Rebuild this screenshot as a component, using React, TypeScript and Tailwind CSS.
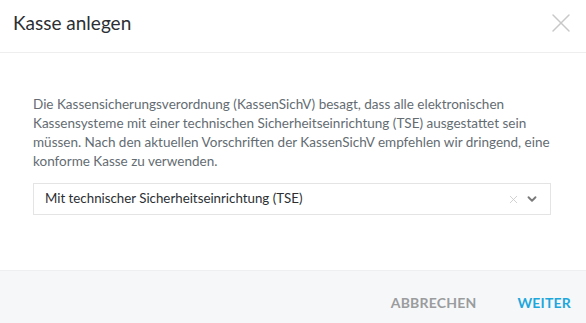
import { X, ChevronDown } from "lucide-react"

export default function App() {
  return (
    <div
      className="w-[586px] h-[323px] bg-white flex flex-col overflow-hidden"
      style={{ fontFamily: 'Lato, "Open Sans", "Liberation Sans", sans-serif' }}
    >
      {/* Header */}
      <div className="h-[53px] flex items-center justify-between pl-[13px] pr-[9px] pb-[6px] border-b border-[#eeeeee]">
        <h2 className="text-[19px] text-[#2b2f33]">Kasse anlegen</h2>
        <X className="w-[32px] h-[32px] text-[#c8c8c8]" strokeWidth={1.1} />
      </div>

      {/* Body */}
      <div className="flex-1 px-[33px] pt-[42px]">
        <p className="text-[13.5px] leading-[19px] text-[#646c72]">
          Die Kassensicherungsverordnung (KassenSichV) besagt, dass alle elektronischen
          <br />
          Kassensysteme mit einer technischen Sicherheitseinrichtung (TSE) ausgestattet sein
          <br />
          müssen. Nach den aktuellen Vorschriften der KassenSichV empfehlen wir dringend, eine
          <br />
          konforme Kasse zu verwenden.
        </p>
        <div className="mt-[12px] mr-[2px] h-[32px] border border-[#e4e4e4] flex items-center pl-[11px] pr-[11px]">
          <span className="flex-1 text-[13.3px] text-[#2b2f33]">
            Mit technischer Sicherheitseinrichtung (TSE)
          </span>
          <X className="w-[13px] h-[13px] text-[#c8c8c8]" strokeWidth={1.5} />
          <ChevronDown className="ml-[5px] w-[14px] h-[14px] text-[#7a7a7a]" strokeWidth={3.2} />
        </div>
      </div>

      {/* Footer */}
      <div className="h-[53px] bg-[#f6f7f9] border-t border-[#eeeff1] flex items-center justify-end gap-[41px] pr-[15px] pt-[10px]">
        <button className="text-[14px] font-bold text-[#9a9c9e] tracking-[0.2px]">ABBRECHEN</button>
        <button className="text-[14px] font-bold text-[#1ea7dc] tracking-[0.2px]">WEITER</button>
      </div>
    </div>
  )
}
